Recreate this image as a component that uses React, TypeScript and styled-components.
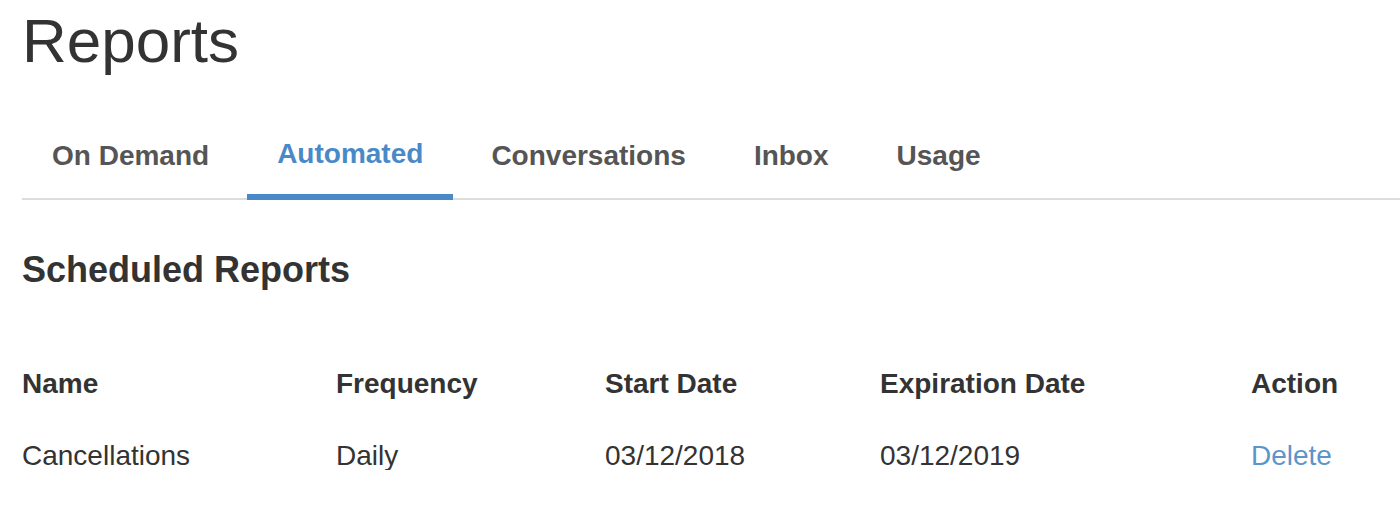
import React from 'react';
import styled, { createGlobalStyle } from 'styled-components';

const GlobalStyle = createGlobalStyle`
  body {
    margin: 0;
    background: #fff;
    font-family: 'Liberation Sans', Arial, Helvetica, sans-serif;
    color: #333;
  }
`;

const Page = styled.div`
  padding: 10px 0 0 22px;
`;

const Title = styled.h1`
  margin: 0;
  font-size: 62px;
  line-height: 62px;
  font-weight: 400;
  color: #333;
`;

const TabBar = styled.ul`
  list-style: none;
  margin: 40px 0 0;
  padding: 0;
  display: flex;
  border-bottom: 2px solid #dcdcdc;
`;

const Tab = styled.li<{ $active?: boolean }>`
  padding: ${(p) => (p.$active ? '28px 30px 26px' : '30px 30px 24px')};
  margin: 0 8px -2px 0;
  font-size: 28px;
  line-height: 28px;
  font-weight: 700;
  color: ${(p) => (p.$active ? '#4a89c7' : '#555')};
  border-bottom: 6px solid ${(p) => (p.$active ? '#4a89c7' : 'transparent')};
  cursor: pointer;
`;

const SectionTitle = styled.h2`
  margin: 52px 0 0;
  font-size: 36px;
  line-height: 36px;
  font-weight: 700;
  color: #333;
`;

const Table = styled.div`
  margin-top: 82px;
  display: flex;
  flex-direction: column;
  gap: 44px;
`;

const Row = styled.div`
  display: grid;
  grid-template-columns: 314px 269px 275px 371px 1fr;
`;

const Cell = styled.div<{ $head?: boolean }>`
  font-size: 28px;
  line-height: 28px;
  font-weight: ${(p) => (p.$head ? 700 : 400)};
  color: #333;
  white-space: nowrap;
`;

const ActionLink = styled.a`
  color: #5b95c9;
  text-decoration: none;
  cursor: pointer;
`;

const tabs = ['On Demand', 'Automated', 'Conversations', 'Inbox', 'Usage'];
const columns = ['Name', 'Frequency', 'Start Date', 'Expiration Date', 'Action'];

const reports = [
  { name: 'Cancellations', frequency: 'Daily', start: '03/12/2018', expires: '03/12/2019' },
];

export default function App() {
  return (
    <Page>
      <GlobalStyle />
      <Title>Reports</Title>
      <TabBar>
        {tabs.map((t) => (
          <Tab key={t} $active={t === 'Automated'}>
            {t}
          </Tab>
        ))}
      </TabBar>
      <SectionTitle>Scheduled Reports</SectionTitle>
      <Table>
        <Row>
          {columns.map((c) => (
            <Cell key={c} $head>
              {c}
            </Cell>
          ))}
        </Row>
        {reports.map((r) => (
          <Row key={r.name}>
            <Cell>{r.name}</Cell>
            <Cell>{r.frequency}</Cell>
            <Cell>{r.start}</Cell>
            <Cell>{r.expires}</Cell>
            <Cell>
              <ActionLink>Delete</ActionLink>
            </Cell>
          </Row>
        ))}
      </Table>
    </Page>
  );
}
